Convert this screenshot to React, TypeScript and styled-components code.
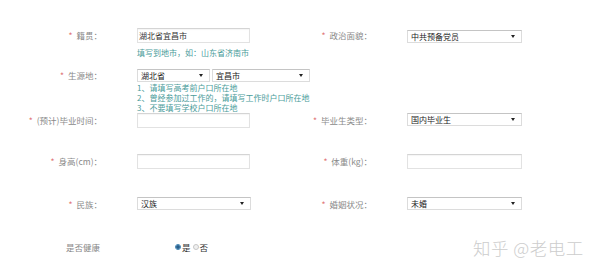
import styled, { createGlobalStyle } from "styled-components";

const GlobalStyle = createGlobalStyle`
  html, body {
    margin: 0;
    padding: 0;
    background: #ffffff;
  }
  body {
    font-family: "Noto Sans CJK SC", "Noto Sans", sans-serif;
    width: 600px;
    height: 270px;
    overflow: hidden;
  }
`;

const Page = styled.div`
  position: relative;
  width: 600px;
  height: 270px;
  padding-top: 28px;
  box-sizing: border-box;
`;

const Row = styled.div<{ top: number }>`
  display: grid;
  grid-template-columns: 102px 128px 72px 115px;
  column-gap: 35px;
  align-items: start;
  margin-top: ${(p) => p.top}px;
`;

const Label = styled.div<{ h: number }>`
  text-align: right;
  font-size: 8.5px;
  color: #8a8a8a;
  height: ${(p) => p.h}px;
  line-height: ${(p) => p.h}px;
  white-space: nowrap;
`;

const Star = styled.span`
  color: #e07474;
  margin-right: 4px;
`;

const Field = styled.div<{ span?: boolean }>`
  grid-column: ${(p) => (p.span ? "2 / 5" : "auto")};
  display: flex;
  flex-direction: column;
  align-items: flex-start;
`;

const Input = styled.div<{ w: number }>`
  width: ${(p) => p.w}px;
  height: 15px;
  box-sizing: border-box;
  border: 1px solid #e2e2e2;
  border-top-color: #d4d4d4;
  box-shadow: inset 0 1px 1px rgba(0, 0, 0, 0.04);
  background: #fff;
  font-size: 8px;
  line-height: 13px;
  color: #333;
  padding-left: 1px;
`;

const Select = styled.div<{ w: number }>`
  position: relative;
  width: ${(p) => p.w}px;
  height: 13px;
  box-sizing: border-box;
  border: 1px solid #dcdcdc;
  border-top-color: #c4c4c4;
  background: #fff;
  font-size: 8px;
  line-height: 11px;
  color: #222;
  padding-left: 3px;
  &::after {
    content: "";
    position: absolute;
    right: 6px;
    top: 4px;
    border-left: 2.5px solid transparent;
    border-right: 2.5px solid transparent;
    border-top: 3px solid #222;
  }
`;

const Pair = styled.div`
  display: flex;
  gap: 2px;
`;

const Hint = styled.div<{ mt?: number }>`
  font-size: 8px;
  line-height: 10px;
  color: #4a9c9a;
  margin-top: ${(p) => p.mt ?? 0}px;
  white-space: nowrap;
`;

const Radios = styled.div`
  display: flex;
  align-items: center;
  height: 12px;
  padding-left: 38px;
  font-size: 8.5px;
  color: #333;
`;

const Radio = styled.span<{ checked?: boolean }>`
  width: 6px;
  height: 6px;
  border-radius: 50%;
  box-sizing: border-box;
  margin-right: 1px;
  border: 1px solid ${(p) => (p.checked ? "#3b7fb0" : "#c6c6c6")};
  background: ${(p) =>
    p.checked ? "radial-gradient(circle, #2a5f8a 0 1.5px, #9cc6e4 2px)" : "#f0f0f0"};
`;

const Watermark = styled.div`
  position: absolute;
  left: 473px;
  top: 235px;
  font-size: 17.5px;
  font-weight: 300;
  letter-spacing: 0.5px;
  color: #cdcdcd;
  text-shadow: 0 0 1px #fff;
`;

export default function App() {
  return (
    <Page>
      <GlobalStyle />
      <Row top={0}>
        <Label h={15}>
          <Star>*</Star>籍贯：
        </Label>
        <Field>
          <Input w={113}>湖北省宜昌市</Input>
          <Hint mt={5}>填写到地市，如：山东省济南市</Hint>
        </Field>
        <Label h={15}>
          <Star>*</Star>政治面貌：
        </Label>
        <Field>
          <Select w={115} style={{ marginTop: 2 }}>中共预备党员</Select>
        </Field>
      </Row>

      <Row top={11}>
        <Label h={13}>
          <Star>*</Star>生源地：
        </Label>
        <Field span>
          <Pair>
            <Select w={73}>湖北省</Select>
            <Select w={98}>宜昌市</Select>
          </Pair>
          <Hint mt={1}>1、请填写高考前户口所在地</Hint>
          <Hint>2、曾经参加过工作的，请填写工作时户口所在地</Hint>
          <Hint>3、不要填写学校户口所在地</Hint>
        </Field>
      </Row>

      <Row top={0}>
        <Label h={15}>
          <Star>*</Star>(预计)毕业时间：
        </Label>
        <Field>
          <Input w={113} />
        </Field>
        <Label h={15}>
          <Star>*</Star>毕业生类型：
        </Label>
        <Field>
          <Select w={115}>国内毕业生</Select>
        </Field>
      </Row>

      <Row top={26}>
        <Label h={15}>
          <Star>*</Star>身高(cm)：
        </Label>
        <Field>
          <Input w={113} />
        </Field>
        <Label h={15}>
          <Star>*</Star>体重(kg)：
        </Label>
        <Field>
          <Input w={115} />
        </Field>
      </Row>

      <Row top={28}>
        <Label h={14}>
          <Star>*</Star>民族：
        </Label>
        <Field>
          <Select w={114}>汉族</Select>
        </Field>
        <Label h={14}>
          <Star>*</Star>婚姻状况：
        </Label>
        <Field>
          <Select w={115}>未婚</Select>
        </Field>
      </Row>

      <Row top={30}>
        <Label h={12} style={{ paddingRight: 2 }}>是否健康</Label>
        <Field>
          <Radios>
            <Radio checked />是<Radio style={{ marginLeft: 2 }} />否
          </Radios>
        </Field>
      </Row>

      <Watermark>知乎 @老电工</Watermark>
    </Page>
  );
}
